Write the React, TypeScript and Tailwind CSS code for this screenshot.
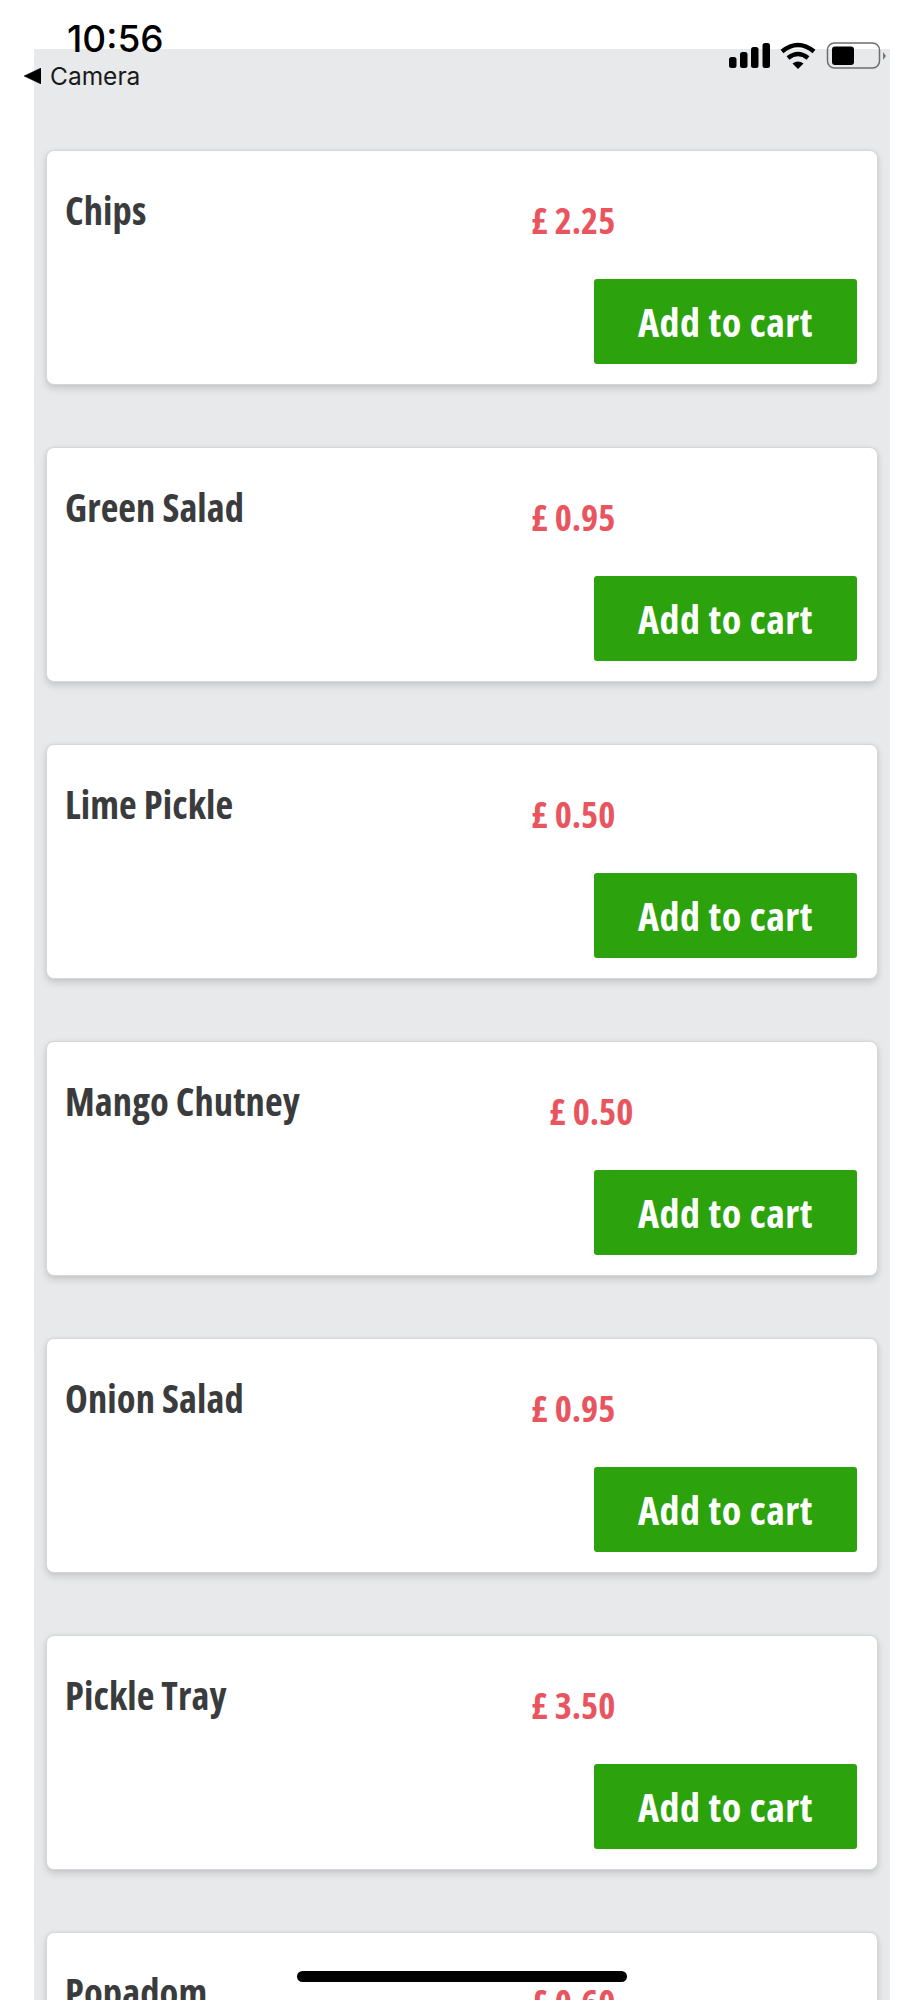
const items = [
  { name: "Chips", price: "£ 2.25", shift: false },
  { name: "Green Salad", price: "£ 0.95", shift: false },
  { name: "Lime Pickle", price: "£ 0.50", shift: false },
  { name: "Mango Chutney", price: "£ 0.50", shift: true },
  { name: "Onion Salad", price: "£ 0.95", shift: false },
  { name: "Pickle Tray", price: "£ 3.50", shift: false },
  { name: "Popadom", price: "£ 0.60", shift: false },
];

const condensed = "font-['Open_Sans','Noto_Sans',sans-serif] font-bold [font-stretch:75%]";

function Card({ name, price, shift }: { name: string; price: string; shift: boolean }) {
  return (
    <div className="h-[235px] shrink-0 rounded-[8px] border border-[#d6d7da] bg-white pl-[18px] pr-[20px] pt-[35px] shadow-[0_4px_7px_rgba(0,0,0,0.13),0_0_4px_rgba(0,0,0,0.05)]">
      <div className="flex h-[93px] items-start">
        <div className={`w-[466px] text-[38.500px] tracking-[0.1px] leading-[48px] text-[#3a3b3d] ${condensed}`}>{name}</div>
        <div className={`mt-[10px] text-[36.500px] leading-[48px] text-[#e9555f] ${shift ? "ml-[18px]" : ""} ${condensed}`}>{price}</div>
      </div>
      <div className="flex justify-end">
        <button className={`h-[85px] w-[263px] rounded-[3px] bg-[#2ca30d] text-[40px] tracking-[0.6px] text-white ${condensed}`}>Add to cart</button>
      </div>
    </div>
  );
}

export default function App() {
  return (
    <div className="relative h-[2000px] overflow-hidden bg-white">
      <main className="ml-[34px] mt-[49px] flex h-[1951px] w-[856px] flex-col gap-[62px] overflow-hidden bg-[#e8e9eb] px-[12px] pt-[101px]">
        {items.map((i) => <Card key={i.name} {...i} />)}
      </main>

      <div className="absolute left-[67px] top-[15px] font-['Inter',sans-serif] text-[37px] font-medium leading-[48px] text-black">10:56</div>
      <div className="absolute left-[24px] top-[60px] flex items-center gap-[9px] font-['Inter',sans-serif] text-[24.500px] leading-[32px] text-[#1a1a1a]">
        <svg width="17" height="16" viewBox="0 0 17 16"><path d="M0 8 17 0v16z" fill="#000" stroke="#000" stroke-width="0.500" /></svg>
        <span>Camera</span>
      </div>
      <div className="absolute left-[728px] top-[42px] flex items-center">
        <svg width="160" height="28" viewBox="0 0 160 28">
          <rect x="1" y="15" width="7.500" height="11" rx="2.500" fill="#000" />
          <rect x="12" y="10" width="7.500" height="16" rx="2.500" fill="#000" />
          <rect x="23" y="5" width="7.500" height="21" rx="2.500" fill="#000" />
          <rect x="34.500" y="1" width="7.500" height="25" rx="2.500" fill="#000" />
          <path d="M54 9.500Q70-3.500 86 9.500" fill="none" stroke="#000" stroke-width="4.500" />
          <path d="M60 16Q70 8 80 16" fill="none" stroke="#000" stroke-width="4.500" />
          <path d="M64.500 21.500Q70 17.500 75.500 21.500L70 27z" fill="#000" />
          <rect x="99.500" y="1" width="52" height="25" rx="7" fill="none" stroke="#6e6e6e" stroke-width="1.500" />
          <rect x="104" y="4.500" width="22" height="18.500" rx="3" fill="#000" />
          <path d="M155 10l3 4-3 4z" fill="#777" />
        </svg>
      </div>
      <div className="absolute left-[297px] top-[1971px] h-[11px] w-[330px] rounded-full bg-black" />
    </div>
  );
}
